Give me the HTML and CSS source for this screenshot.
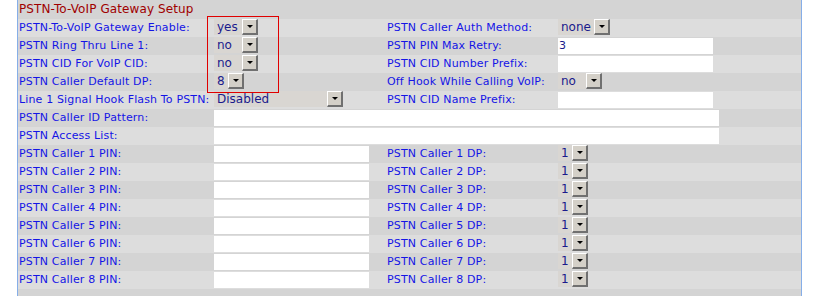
FILE: index.html
```html
<!DOCTYPE html>
<html lang="en">
<head>
    <meta charset="UTF-8">
    <title>PSTN-To-VoIP Gateway Setup</title>
    <link rel="stylesheet" href="styles.css">
</head>
<body>
    <div class="panel">
        <div class="title">PSTN-To-VoIP Gateway Setup</div>
        <table class="setup">
            <colgroup>
                <col class="c1"><col class="c2"><col class="c3"><col class="c4">
            </colgroup>
            <tr>
                <td class="lbl">PSTN-To-VoIP Gateway Enable:</td>
                <td><span class="sel w44"><span class="val">yes</span><span class="btn"></span></span></td>
                <td class="lbl2">PSTN Caller Auth Method:</td>
                <td><span class="sel w52"><span class="val">none</span><span class="btn"></span></span></td>
            </tr>
            <tr>
                <td class="lbl">PSTN Ring Thru Line 1:</td>
                <td><span class="sel w44"><span class="val">no</span><span class="btn"></span></span></td>
                <td class="lbl2">PSTN PIN Max Retry:</td>
                <td><span class="txt">3</span></td>
            </tr>
            <tr>
                <td class="lbl">PSTN CID For VoIP CID:</td>
                <td><span class="sel w44"><span class="val">no</span><span class="btn"></span></span></td>
                <td class="lbl2">PSTN CID Number Prefix:</td>
                <td><span class="txt"></span></td>
            </tr>
            <tr>
                <td class="lbl">PSTN Caller Default DP:</td>
                <td><span class="sel w30"><span class="val">8</span><span class="btn"></span></span></td>
                <td class="lbl2">Off Hook While Calling VoIP:</td>
                <td><span class="sel w44"><span class="val">no</span><span class="btn"></span></span></td>
            </tr>
            <tr>
                <td class="lbl">Line 1 Signal Hook Flash To PSTN:</td>
                <td><span class="sel w129"><span class="val">Disabled</span><span class="btn"></span></span></td>
                <td class="lbl2">PSTN CID Name Prefix:</td>
                <td><span class="txt"></span></td>
            </tr>
            <tr>
                <td class="lbl">PSTN Caller ID Pattern:</td>
                <td colspan="3"><span class="txt wide"></span></td>
            </tr>
            <tr>
                <td class="lbl">PSTN Access List:</td>
                <td colspan="3"><span class="txt wide"></span></td>
            </tr>
            <tr>
                <td class="lbl">PSTN Caller 1 PIN:</td>
                <td><span class="txt"></span></td>
                <td class="lbl2">PSTN Caller 1 DP:</td>
                <td><span class="sel w30"><span class="val">1</span><span class="btn"></span></span></td>
            </tr>
            <tr>
                <td class="lbl">PSTN Caller 2 PIN:</td>
                <td><span class="txt"></span></td>
                <td class="lbl2">PSTN Caller 2 DP:</td>
                <td><span class="sel w30"><span class="val">1</span><span class="btn"></span></span></td>
            </tr>
            <tr>
                <td class="lbl">PSTN Caller 3 PIN:</td>
                <td><span class="txt"></span></td>
                <td class="lbl2">PSTN Caller 3 DP:</td>
                <td><span class="sel w30"><span class="val">1</span><span class="btn"></span></span></td>
            </tr>
            <tr>
                <td class="lbl">PSTN Caller 4 PIN:</td>
                <td><span class="txt"></span></td>
                <td class="lbl2">PSTN Caller 4 DP:</td>
                <td><span class="sel w30"><span class="val">1</span><span class="btn"></span></span></td>
            </tr>
            <tr>
                <td class="lbl">PSTN Caller 5 PIN:</td>
                <td><span class="txt"></span></td>
                <td class="lbl2">PSTN Caller 5 DP:</td>
                <td><span class="sel w30"><span class="val">1</span><span class="btn"></span></span></td>
            </tr>
            <tr>
                <td class="lbl">PSTN Caller 6 PIN:</td>
                <td><span class="txt"></span></td>
                <td class="lbl2">PSTN Caller 6 DP:</td>
                <td><span class="sel w30"><span class="val">1</span><span class="btn"></span></span></td>
            </tr>
            <tr>
                <td class="lbl">PSTN Caller 7 PIN:</td>
                <td><span class="txt"></span></td>
                <td class="lbl2">PSTN Caller 7 DP:</td>
                <td><span class="sel w30"><span class="val">1</span><span class="btn"></span></span></td>
            </tr>
            <tr>
                <td class="lbl">PSTN Caller 8 PIN:</td>
                <td><span class="txt"></span></td>
                <td class="lbl2">PSTN Caller 8 DP:</td>
                <td><span class="sel w30"><span class="val">1</span><span class="btn"></span></span></td>
            </tr>
        </table>
    </div>

    <!-- highlight box round the first four dropdowns -->
    <div class="mark"></div>
</body>
</html>
```

FILE: styles.css
```css
/* page */
body { margin: 0; background: #fff; font-family: "DejaVu Sans", Verdana, sans-serif; font-size: 11px; }

.panel {
    margin-left: 17px;
    width: 783px;
    height: 296px;
    background: #d4d4d4;
    border-left: 1px solid #86aee8;
    border-right: 1px solid #86aee8;
}
.title {
    height: 19px;
    line-height: 19px;
    padding-left: 1px;
    color: #a00000;
    font-size: 12px;
    letter-spacing: 0.1px;
}

/* rows */
.setup { border-collapse: collapse; table-layout: fixed; width: 783px; }
.setup col.c1 { width: 196px; }
.setup col.c2 { width: 155px; }
.setup col.c3 { width: 189px; }
.setup col.c4 { width: 243px; }
.setup td { height: 18px; padding: 0; vertical-align: top; white-space: nowrap; }
.setup tr:nth-child(odd) { background: #dddddd; }
.setup tr:nth-child(even) { background: #d4d4d4; }
.lbl, .lbl2 { color: #1414e6; line-height: 18px; letter-spacing: 0.15px; }
.lbl { padding-left: 1px !important; }
.lbl2 { padding-left: 18px !important; }

/* text fields */
.txt {
    display: block;
    width: 155px;
    height: 16px;
    margin-top: 1px;
    background: #fff;
    color: #1a1a8c;
    line-height: 16px;
    padding-left: 1px;
    box-sizing: border-box;
}
.txt.wide { width: 505px; }

/* dropdowns */
.sel {
    display: flex;
    height: 16px;
    background: #d9d6d2;
    color: #1a1a8c;
    font-size: 12px;
    line-height: 16px;
}
.sel .val { flex: 1; padding-left: 3px; }
.sel .btn {
    width: 16px;
    height: 16px;
    box-sizing: border-box;
    background: #d4d0c8;
    border-top: 1px solid #fff;
    border-left: 1px solid #fff;
    border-right: 2px solid #707070;
    border-bottom: 2px solid #707070;
    position: relative;
}
.sel .btn::after {
    content: "";
    position: absolute;
    left: 4px;
    top: 5px;
    border-left: 3px solid transparent;
    border-right: 3px solid transparent;
    border-top: 3px solid #000;
}
.w30 { width: 30px; }
.w44 { width: 44px; }
.w52 { width: 52px; }
.w129 { width: 129px; }

.mark {
    position: absolute;
    left: 207px;
    top: 16px;
    width: 70px;
    height: 75px;
    border: 1px solid #e00000;
}
```
